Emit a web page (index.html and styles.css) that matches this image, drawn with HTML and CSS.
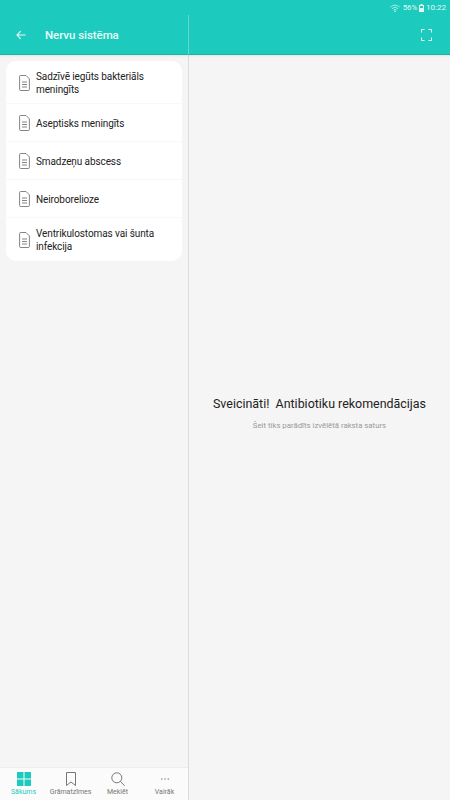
FILE: index.html
```html
<!DOCTYPE html>
<html lang="lv">
<head>
<meta charset="utf-8">
<title>Nervu sistēma</title>
<link rel="stylesheet" href="styles.css">
</head>
<body>
<div class="status">
  <svg class="wifi" width="10" height="8" viewBox="0 0 10 8"><path d="M.5 3A6.500 6.500 0 0 1 9.500 3M2 4.600A4.300 4.300 0 0 1 8 4.600M3.500 6.100A2.200 2.200 0 0 1 6.500 6.100" fill="none" stroke="#a9ebe4" stroke-width="1"/><circle cx="5" cy="7.200" r=".8" fill="#cdf3ee"/></svg>
  <span class="pct">56%</span>
  <svg width="5" height="8" viewBox="0 0 5 8"><path d="M1.500 0h2v1H5v7H0V1h1.500z" fill="#e4f9f6"/><rect x="1" y="2" width="3" height="2" fill="#1ccbbd"/></svg>
  <span>10:22</span>
</div>
<div class="main">
  <section class="left">
    <header class="bar">
      <svg class="back" width="10" height="10" viewBox="0 0 10 10"><path d="M9.500 5H1M4.700 1.200 1 5l3.700 3.800" fill="none" stroke="#e8fbf8" stroke-width="1.100"/></svg>
      <h1 class="title">Nervu sistēma</h1>
    </header>
    <div class="content">
      <ul class="card">
        <li class="row tall">
          <svg class="doc" width="11" height="16" viewBox="0 0 11 16"><path d="M.6 1.500a1 1 0 0 1 1-1h5.400l3.400 3.400v10.600a1 1 0 0 1-1 1H1.600a1 1 0 0 1-1-1z" fill="none" stroke="#777" stroke-width=".9"/><path d="M3 7h5M3 9.500h5M3 12h5" stroke="#777" stroke-width=".9"/></svg>
          <span>Sadzīvē iegūts bakteriāls meningīts</span>
        </li>
        <li class="row">
          <svg class="doc" width="11" height="16" viewBox="0 0 11 16"><path d="M.6 1.500a1 1 0 0 1 1-1h5.400l3.400 3.400v10.600a1 1 0 0 1-1 1H1.600a1 1 0 0 1-1-1z" fill="none" stroke="#777" stroke-width=".9"/><path d="M3 7h5M3 9.500h5M3 12h5" stroke="#777" stroke-width=".9"/></svg>
          <span>Aseptisks meningīts</span>
        </li>
        <li class="row">
          <svg class="doc" width="11" height="16" viewBox="0 0 11 16"><path d="M.6 1.500a1 1 0 0 1 1-1h5.400l3.400 3.400v10.600a1 1 0 0 1-1 1H1.600a1 1 0 0 1-1-1z" fill="none" stroke="#777" stroke-width=".9"/><path d="M3 7h5M3 9.500h5M3 12h5" stroke="#777" stroke-width=".9"/></svg>
          <span>Smadzeņu abscess</span>
        </li>
        <li class="row">
          <svg class="doc" width="11" height="16" viewBox="0 0 11 16"><path d="M.6 1.500a1 1 0 0 1 1-1h5.400l3.400 3.400v10.600a1 1 0 0 1-1 1H1.600a1 1 0 0 1-1-1z" fill="none" stroke="#777" stroke-width=".9"/><path d="M3 7h5M3 9.500h5M3 12h5" stroke="#777" stroke-width=".9"/></svg>
          <span>Neiroborelioze</span>
        </li>
        <li class="row tall">
          <svg class="doc" width="11" height="16" viewBox="0 0 11 16"><path d="M.6 1.500a1 1 0 0 1 1-1h5.400l3.400 3.400v10.600a1 1 0 0 1-1 1H1.600a1 1 0 0 1-1-1z" fill="none" stroke="#777" stroke-width=".9"/><path d="M3 7h5M3 9.500h5M3 12h5" stroke="#777" stroke-width=".9"/></svg>
          <span>Ventrikulostomas vai šunta infekcija</span>
        </li>
      </ul>
    </div>
    <nav class="tabs">
      <div class="tab active">
        <svg width="14" height="14" viewBox="0 0 14 14"><path d="M0 0h6.500v6.500H0zM7.500 0H14v6.500H7.500zM0 7.500h6.500V14H0zM7.500 7.500H14V14H7.500z" fill="#1ccbbd"/></svg>
        <span>Sākums</span>
      </div>
      <div class="tab">
        <svg width="14" height="14" viewBox="0 0 14 14"><path d="M2.500.5h9v13L7 10l-4.500 3.500z" fill="none" stroke="#777" stroke-width="1"/></svg>
        <span>Grāmatzīmes</span>
      </div>
      <div class="tab">
        <svg width="14" height="14" viewBox="0 0 14 14"><circle cx="5.800" cy="5.800" r="5" fill="none" stroke="#777" stroke-width="1"/><path d="M9.400 9.400 13.600 13.800" stroke="#777" stroke-width="1"/></svg>
        <span>Meklēt</span>
      </div>
      <div class="tab">
        <svg width="14" height="14" viewBox="0 0 14 14"><path d="M3 7h1.500M6.300 7h1.500M9.600 7h1.500" stroke="#777" stroke-width="1.200"/></svg>
        <span>Vairāk</span>
      </div>
    </nav>
  </section>
  <section class="right">
    <header class="bar end">
      <svg width="11" height="12" viewBox="0 0 11 12"><path d="M.5 3.500V.5h3M7.500.5h3v3M10.500 8.500v3h-3M3.500 11.500h-3v-3" fill="none" stroke="#e8fbf8" stroke-width="1"/></svg>
    </header>
    <div class="welcome">
      <h2 class="hello">Sveicināti!&nbsp; Antibiotiku rekomendācijas</h2>
      <p class="hint">Šeit tiks parādīts izvēlētā raksta saturs</p>
    </div>
  </section>
</div>
</body>
</html>
```
FILE: styles.css
```css
* { box-sizing: border-box; }
html, body { margin: 0; height: 100%; }
body {
  width: 450px;
  height: 800px;
  display: flex;
  flex-direction: column;
  background: #f5f5f5;
  font-family: Roboto, sans-serif;
  overflow: hidden;
}
.status {
  height: 15px;
  background: #1ccbbd;
  display: flex;
  align-items: center;
  justify-content: flex-end;
  gap: 2px;
  padding-right: 4px;
  font-size: 8px;
  color: #e4f9f6;
}
.wifi { margin-right: 1px; }
.pct { letter-spacing: -.2px; }
.main { flex: 1; display: flex; min-height: 0; }
.left {
  width: 189px;
  display: flex;
  flex-direction: column;
  border-right: 1px solid #dcdcdc;
}
.right { flex: 1; display: flex; flex-direction: column; }
.bar {
  height: 40px;
  flex: none;
  background: #1ccbbd;
  border-bottom: 1px solid #17b5a8;
  box-shadow: 0 1px 2px rgba(0,0,0,.08);
  display: flex;
  align-items: center;
}
.left .bar { padding-left: 16px; margin-right: -1px; border-right: 1px solid #6adfd5; }
.back { margin-right: 19px; }
.title { margin: 0; font-size: 11.500px; font-weight: 500; letter-spacing: -.05px; color: #e8fbf8; }
.end { justify-content: flex-end; padding-right: 18px; }
.content { flex: 1; padding: 6px 6px 0; min-height: 0; }
.card {
  list-style: none;
  margin: 0;
  padding: 0;
  background: #fff;
  border-radius: 10px;
}
.row {
  height: 38px;
  display: flex;
  align-items: center;
  gap: 6px;
  padding: 1px 12px 0 13px;
  font-size: 10px;
  letter-spacing: -.1px;
  line-height: 13px;
  color: #222;
  border-bottom: 1px solid #f8f8f8;
}
.row.tall { height: 43px; }
.row:last-child { border-bottom: 0; }
.doc { flex: none; }
.tabs {
  height: 33px;
  flex: none;
  background: #fbfbfb;
  border-top: 1px solid #eee;
  display: flex;
}
.tab {
  flex: 1;
  display: flex;
  flex-direction: column;
  align-items: center;
  gap: 2px;
  padding-top: 4px;
  font-size: 7px;
  line-height: 9px;
  color: #777;
}
.tab.active { color: #1ccbbd; }
.welcome {
  flex: 1;
  display: flex;
  flex-direction: column;
  align-items: center;
  padding-top: 340px;
}
.hello { margin: 0; font-size: 12.450px; font-weight: 400; line-height: 17px; color: #222; }
.hint { margin: 8px 0 0; font-size: 7.800px; line-height: 11px; color: #999; }
```
